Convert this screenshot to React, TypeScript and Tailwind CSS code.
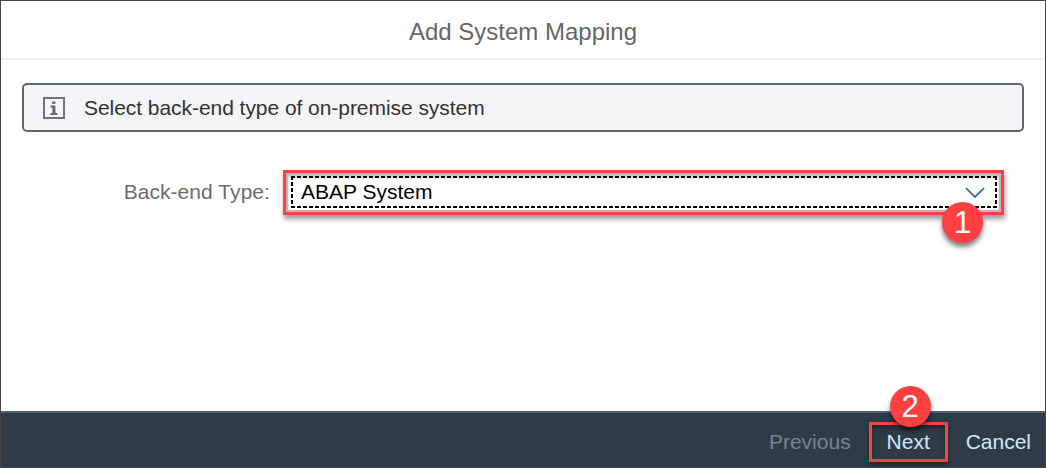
import React from "react";

function InfoIcon() {
  return (
    <svg className="block h-[22px] w-[22px]" viewBox="0 0 22 22" fill="none">
      <rect x="1" y="1" width="20" height="20" stroke="#6a777e" strokeWidth="2" />
      <path d="M9.2 4.4h3.2v2.6H9.2zM7.6 8.6h4.8v7.4h2v2H7.4v-2h2v-5.4H7.6z" fill="#5f6c74" />
    </svg>
  );
}

function Step({ n, className }: { n: number; className: string }) {
  return (
    <span
      className={`absolute flex h-[41px] w-[41px] items-center justify-center rounded-full bg-[#ff4043] text-[31px] leading-none text-white shadow-[0_4px_5px_rgba(0,0,0,0.5)] ${className}`}
    >
      {n}
    </span>
  );
}

export default function App() {
  return (
    <div className="flex h-[468px] w-[1046px] flex-col border border-[#474547] bg-white font-['Liberation_Sans',Arial,sans-serif] text-[21px]">
      <header className="flex h-[59px] shrink-0 items-center justify-center border-b-2 border-[#f0f0f0] pt-[3px] text-[24px] text-[#666666]">
        <h1 className="leading-[27px]">Add System Mapping</h1>
      </header>

      <main className="flex flex-1 flex-col pt-[23px]">
        <div className="ml-[21px] flex h-[49px] w-[1002px] items-center rounded-[5px] border-2 border-[#5e696e] bg-[#f4f5f6] pl-[19px] text-[#333333]">
          <InfoIcon />
          <span className="ml-[19px] leading-6 tracking-[-0.05px]">Select back-end type of on-premise system</span>
        </div>

        <div className="mt-[38px] flex h-[45px]">
          <label className="w-[269px] shrink-0 text-right leading-[44px] tracking-[0.06px] text-[#6a6d70]">Back-end Type:</label>
          <div className="relative ml-[13px] h-[45px] w-[721px] border-[3px] border-[#ff4043] bg-white shadow-[1px_4px_5px_rgba(0,0,0,0.4)]">
            <div className="flex h-full w-full border-2 border-[#b9b9b9] bg-white shadow-[inset_0_2px_3px_rgba(0,0,0,0.25)]">
              <div className="relative flex flex-1 items-center pr-[14px] pl-[13px] text-black">
                <svg className="absolute top-0 left-0 h-[35px] w-[711px]" viewBox="0 0 711 35" fill="none">
                  <path d="M3 2H709M3 32H709" stroke="#000" strokeWidth="2" strokeDasharray="4 2" />
                  <path d="M4 1V33M708 1V33" stroke="#000" strokeWidth="2" strokeDasharray="4 2" />
                </svg>
                <span className="relative flex-1 pb-[2px] leading-6">ABAP System</span>
                <svg className="relative h-[12px] w-[20px]" viewBox="0 0 20 12" fill="none">
                  <path d="M1 1.2 10 10l9-8.8" stroke="#42709a" strokeWidth="1.8" />
                </svg>
              </div>
            </div>
            <Step n={1} className="top-[29px] left-[656px]" />
          </div>
        </div>
      </main>

      <footer className="flex h-[56px] shrink-0 items-center justify-end border-t-2 border-[#4d6175] bg-[#2f3c48] pt-[4px] pr-[14px] text-[#d1e8ff]">
        <button className="mr-[18px] leading-6 text-[#758492]" disabled>
          Previous
        </button>
        <div className="relative mr-[18px] flex h-[40px] w-[79px] items-center justify-center border-[3px] border-[#ff4043] shadow-[0_3px_5px_rgba(0,0,0,0.4),inset_0_3px_5px_rgba(0,0,0,0.35)]">
          <button className="leading-6">Next</button>
          <Step n={2} className="-top-[39px] left-[18px]" />
        </div>
        <button className="leading-6">Cancel</button>
      </footer>
    </div>
  );
}
